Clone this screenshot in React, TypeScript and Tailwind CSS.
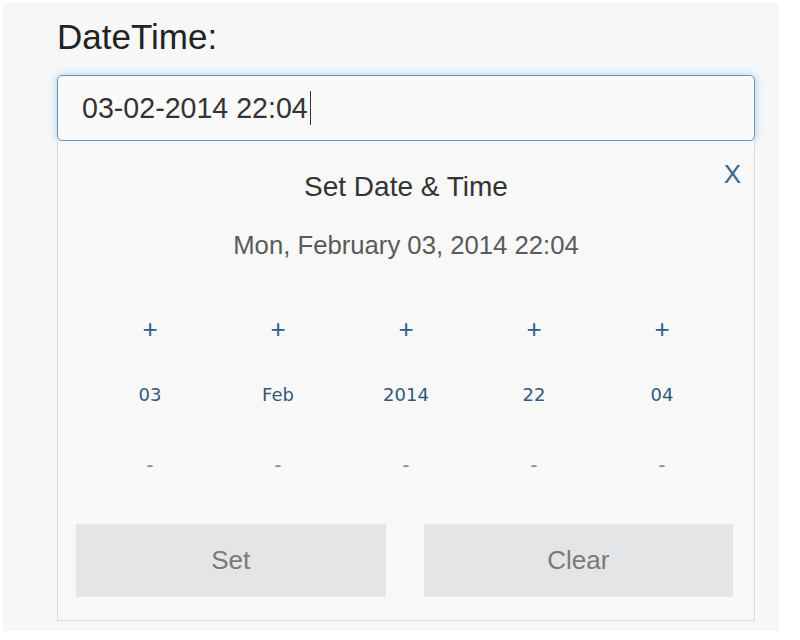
import { useState } from "react"

type Part = {
  key: string
  label: string
}

const parts: Part[] = [
  { key: "day", label: "03" },
  { key: "month", label: "Feb" },
  { key: "year", label: "2014" },
  { key: "hour", label: "22" },
  { key: "minute", label: "04" },
]

export default function App() {
  const [value] = useState("03-02-2014 22:04")

  return (
    <div className="w-[800px] h-[640px] bg-white p-[3px] font-['Liberation_Sans',Arial,sans-serif]">
      <div className="w-[776px] h-[628px] bg-[#f7f7f7] pl-[54px] pt-[16px]">
        <div className="w-[698px]">
          <label className="block text-[35px] leading-none text-[#222]">DateTime:</label>

          {/* text field, focused */}
          <div className="mt-[21px] h-[66px] rounded-[5px] border border-[#6a93b6] bg-[#fafafa] shadow-[0_0_8px_rgba(102,175,233,0.55)] flex items-center pl-[24px]">
            <span className="text-[28.6px] leading-none text-[#333]">{value}</span>
            <span className="ml-[2px] w-px h-[34px] bg-[#333]" />
          </div>

          {/* picker */}
          <div className="relative border-x border-b border-[#dcdcdc] bg-[#f8f8f8] pt-[32px] pb-[23px]">
            <button className="absolute top-[20px] right-[13px] text-[26px] leading-none text-[#3d6690]">X</button>

            <h3 className="text-center text-[28px] leading-none text-[#333]">Set Date &amp; Time</h3>
            <p className="mt-[32px] text-center text-[25.7px] leading-none text-[#5a5a5a]">
              Mon, February 03, 2014 22:04
            </p>

            <div className="mt-[37px] px-[28px] grid grid-cols-5">
              {parts.map((p) => (
                <div key={p.key} className="flex flex-col items-center">
                  <div className="h-[66px] flex items-center text-[26px] leading-none text-[#2d5f8a]">+</div>
                  <div className="h-[66px] flex items-center font-['DejaVu_Sans',sans-serif] text-[18px] leading-none text-[#34597d]">
                    {p.label}
                  </div>
                  <div className="h-[76px] flex items-center font-['DejaVu_Sans',sans-serif] text-[19px] leading-none text-[#808080]">
                    -
                  </div>
                </div>
              ))}
            </div>

            <div className="mt-[20px] pl-[18px] pr-[21px] grid grid-cols-2 gap-[38px]">
              <button className="h-[73px] bg-[#e4e5e6] text-[26px] text-[#7a7a7a]">Set</button>
              <button className="h-[73px] bg-[#e4e5e6] text-[26px] text-[#7a7a7a]">Clear</button>
            </div>
          </div>
        </div>
      </div>
    </div>
  )
}
